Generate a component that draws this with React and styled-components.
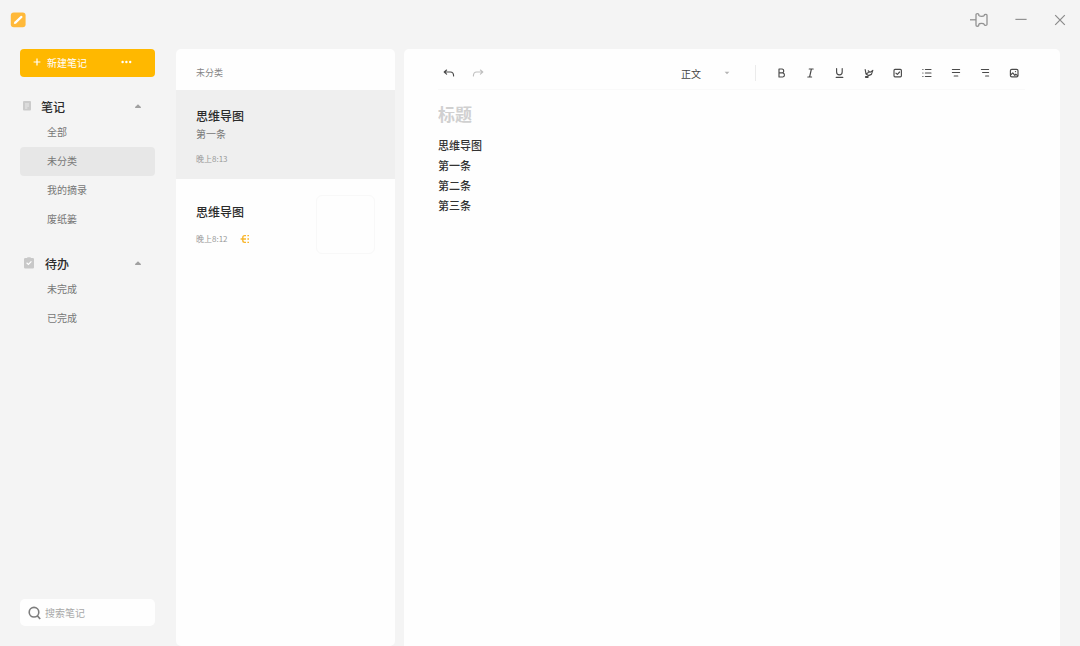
import React, { useState } from 'react'
import styled, { createGlobalStyle } from 'styled-components';

const GlobalStyle = createGlobalStyle`
    * {
        box-sizing: border-box;
    }

    body {
        margin: 0;
        background: #f4f4f4;
        color: #333;
        font-family: "Noto Sans CJK SC", "Noto Sans", sans-serif;
        font-size: 10px;
    }

    button, input, textarea, select {
        margin: 0;
        padding: 0;
        border: 0;
        outline: none;
        background: none;
        color: inherit;
        font: inherit;
    }

    button {
        cursor: pointer;
    }

    svg {
        display: block;
        flex: none;
    }

    h2, p, ul {
        margin: 0;
        padding: 0;
        font-size: inherit;
        list-style: none;
    }
`;

/* ---------- icons ---------- */

const Line = ({ size = 12, width = 1.15, children }) => (
    <svg width={size} height={size} viewBox="0 0 12 12" fill="none" stroke="currentColor"
        strokeWidth={width} strokeLinecap="round" strokeLinejoin="round" aria-hidden="true">
        {children}
    </svg>
)

const AppLogo = () => (
    <svg width="16" height="16" viewBox="0 0 16 16" aria-hidden="true">
        <rect x="0.8" y="0.4" width="14.8" height="14.8" rx="3" fill="#ffb93a" />
        <path d="M5.6 10.4 11.4 4.9" stroke="#fff" strokeWidth="2.2" strokeLinecap="round" />
        <path d="M3.8 12 4.6 9.4 6.5 11.3Z" fill="#fff" />
    </svg>
)

const PinIcon = () => (
    <svg width="18" height="16" viewBox="0 0 18 16" fill="none" stroke="#929292" strokeWidth="1.3" strokeLinejoin="round" aria-hidden="true">
        <path d="M0 7.8H6" />
        <path d="M6 2.6C6 1.2 8.8 1.2 8.8 2.6V3.6C9.2 4.6 13.6 4.6 14.2 3.6V3.2C14.4 2.1 17 2.1 17 3.2V12.6C17 13.7 14.4 13.7 14.2 12.6V12.2C13.6 11 9.2 11 8.8 12.2V13.2C8.8 14.6 6 14.6 6 13.2Z" />
    </svg>
)

const MinusIcon = () => (
    <svg width="12" height="12" viewBox="0 0 12 12" stroke="#929292" strokeWidth="1.2" aria-hidden="true">
        <path d="M0.4 5.4H11.6" />
    </svg>
)

const CloseIcon = () => (
    <svg width="12" height="12" viewBox="0 0 12 12" stroke="#8a8a8a" strokeWidth="1.2" aria-hidden="true">
        <path d="M1.2 1.2 10.8 10.8M10.8 1.2 1.2 10.8" />
    </svg>
)

const PlusIcon = () => (
    <svg width="8" height="8" viewBox="0 0 8 8" stroke="#fff" strokeWidth="1.2" aria-hidden="true">
        <path d="M0.6 4H7.4M4 0.6V7.4" />
    </svg>
)

const MoreIcon = () => (
    <svg width="12" height="4" viewBox="0 0 12 4" fill="#fff" aria-hidden="true">
        <circle cx="1.6" cy="2" r="1.2" />
        <circle cx="5.4" cy="2" r="1.2" />
        <circle cx="9.2" cy="2" r="1.2" />
    </svg>
)

const NoteIcon = () => (
    <svg width="8" height="10" viewBox="0 0 8 10" aria-hidden="true">
        <rect width="8" height="9.4" rx="1" fill="#cbcbcb" />
        <path d="M2 3H6M2 5H6M2 7H4.4" stroke="#f4f4f4" strokeWidth="0.8" />
    </svg>
)

const TodoIcon = () => (
    <svg width="12" height="12" viewBox="0 0 12 12" aria-hidden="true">
        <path d="M2.2 1H4L4.6 0.2H7.4L8 1H9.8Q11 1 11 2.2V10.3Q11 11.6 9.8 11.6H2.2Q1 11.6 1 10.3V2.2Q1 1 2.2 1Z" fill="#c8c8c8" />
        <path d="M3.6 5.8 5.4 7.4 8.4 4.4" stroke="#fff" strokeWidth="1.2" fill="none" />
    </svg>
)

const CaretUp = () => (
    <svg width="6" height="4" viewBox="0 0 6 4" aria-hidden="true">
        <path d="M0 4Q0 2.6 1.2 2L3 0.2 4.8 2Q6 2.6 6 4Z" fill="#a0a0a0" />
    </svg>
)

const CaretDown = () => (
    <svg width="6" height="4" viewBox="0 0 6 4" aria-hidden="true">
        <path d="M0.6 0.8H5.4L3 3.2Z" fill="#b4b4b4" />
    </svg>
)

const SearchIcon = () => (
    <svg width="14" height="14" viewBox="0 0 14 14" fill="none" stroke="#7d7d7d" strokeWidth="1.6" aria-hidden="true">
        <circle cx="6" cy="6.2" r="4.8" />
        <path d="M9.2 9.6 12.2 13" />
    </svg>
)

const MindMapIcon = () => (
    <svg width="10" height="10" viewBox="0 0 10 10" fill="none" stroke="#f8b62d" strokeWidth="1.4" aria-hidden="true">
        <path d="M6 1.6H4.6Q2.8 1.6 2.8 3.4V6.6Q2.8 8.4 4.6 8.4H6M0.6 5H6" />
        <path d="M7.4 1.6H9M7.4 5H9M7.4 8.4H9" />
    </svg>
)

const UndoIcon = () => (
    <Line>
        <path d="M3.6 3 1.2 5 3.6 7.2M1.2 5H7.4Q10.6 5 10.6 9" />
    </Line>
)

const RedoIcon = () => (
    <Line>
        <path d="M8.4 3 10.8 5 8.4 7.2M10.8 5H4.6Q1.4 5 1.4 9" />
    </Line>
)

const FORMATS = [
    { label: '加粗', art: <path d="M3 2H6.2A2 2 0 0 1 6.2 5.9H3ZM3 5.9H6.8A2.1 2.1 0 0 1 6.8 10H3Z" /> },
    { label: '斜体', art: <path d="M4.2 2H8.2M2.8 10H6.6M6.4 2 4.6 10" /> },
    { label: '下划线', art: <path d="M2.6 1.6V5A2.8 2.8 0 0 0 8.2 5V1.6M2.2 10.4H8.8" /> },
    {
        label: '高亮', art: <>
            <path d="M2.2 2.6 3 7 5.4 8.6 8.4 7.4 9.8 3.4 7 5.4 5.2 3.8M3 7 5.4 5.6" />
            <path d="M2.8 10H4.8" strokeWidth="1.8" />
        </>
    },
    {
        label: '待办', art: <>
            <rect x="2" y="2.4" width="7.4" height="7.4" rx="1" />
            <path d="M4 6.2 5.4 7.4 7.6 5" />
        </>
    },
    { label: '列表', art: <path d="M4.4 2.5H10M4.4 6H10M4.4 9.5H10M1.8 2.5H2M1.8 6H2M1.8 9.5H2" /> },
    { label: '居中', art: <path d="M2.4 2.5H9.6M2.4 5.5H9.6M4.2 9H7.8" /> },
    { label: '右对齐', art: <path d="M2.4 2.5H9.6M3.6 5.5H9.6M6.6 9H9.6" /> },
    {
        label: '图片', art: <>
            <rect x="2.4" y="2.4" width="7.6" height="7.4" rx="1.4" />
            <path d="M2.6 8 4.8 5.8 6.8 8.4 7.8 7.2 9.6 8.6M7.4 4.6H7.6" />
        </>
    },
]

/* ---------- data ---------- */

const GROUPS = [
    { name: '笔记', Icon: NoteIcon, items: ['全部', '未分类', '我的摘录', '废纸篓'] },
    { name: '待办', Icon: TodoIcon, items: ['未完成', '已完成'] },
]

const NOTES = [
    { id: 1, title: '思维导图', text: '第一条', time: '晚上8:13' },
    { id: 2, title: '思维导图', time: '晚上8:12', mindMap: true },
]

/* ---------- parts ---------- */

function Group({ group, current, onPick }) {
    const [open, setOpen] = useState(true);
    const { name, Icon, items } = group;

    return (
        <section>
            <GroupHead type="button" aria-expanded={open} onClick={() => setOpen(!open)}>
                <Icon />
                <span>{name}</span>
                <CaretUp />
            </GroupHead>
            {open && <ul>
                {items.map((item) => (
                    <li key={item}>
                        <NavItem type="button" $active={item === current} onClick={() => onPick(item)}>{item}</NavItem>
                    </li>
                ))}
            </ul>}
        </section>
    )
}

function NoteCard({ note, active, onClick }) {
    return (
        <Card type="button" $active={active} onClick={onClick}>
            <CardText>
                <CardTitle>{note.title}</CardTitle>
                {note.text && <CardSummary>{note.text}</CardSummary>}
                <CardTime>
                    {note.time}
                    {note.mindMap && <MindMapIcon />}
                </CardTime>
            </CardText>
            {note.mindMap && <Thumb />}
        </Card>
    )
}

function App() {
    const [category, setCategory] = useState('未分类');
    const [noteId, setNoteId] = useState(1);

    return (
        <Window>
            <GlobalStyle />
            <TitleBar>
                <AppLogo />
                <WindowButtons>
                    <button type="button" aria-label="置顶"><PinIcon /></button>
                    <button type="button" aria-label="最小化"><MinusIcon /></button>
                    <button type="button" aria-label="关闭"><CloseIcon /></button>
                </WindowButtons>
            </TitleBar>

            <Body>
                <Sidebar>
                    <NewNote>
                        <NewButton type="button"><PlusIcon />新建笔记</NewButton>
                        <MoreButton type="button" aria-label="更多"><MoreIcon /></MoreButton>
                    </NewNote>
                    {GROUPS.map((group) => (
                        <Group key={group.name} group={group} current={category} onPick={setCategory} />
                    ))}
                    <Search>
                        <SearchIcon />
                        <input type="search" aria-label="搜索笔记" placeholder="搜索笔记" />
                    </Search>
                </Sidebar>

                <NoteList>
                    <ListHead>{category}</ListHead>
                    {NOTES.map((note) => (
                        <NoteCard key={note.id} note={note} active={note.id === noteId} onClick={() => setNoteId(note.id)} />
                    ))}
                </NoteList>

                <Editor>
                    <Toolbar>
                        <Tools>
                            <Tool type="button" aria-label="撤销"><UndoIcon /></Tool>
                            <Tool type="button" aria-label="重做" disabled><RedoIcon /></Tool>
                        </Tools>
                        <StylePicker>
                            <select aria-label="段落样式" defaultValue="正文">
                                <option>正文</option>
                            </select>
                            <CaretDown />
                        </StylePicker>
                        <Divider />
                        <Tools>
                            {FORMATS.map(({ label, art }) => (
                                <Tool key={label} type="button" aria-label={label}><Line>{art}</Line></Tool>
                            ))}
                        </Tools>
                    </Toolbar>
                    <TitleInput aria-label="标题" placeholder="标题" />
                    <Content aria-label="正文" spellCheck="false" defaultValue={'思维导图\n第一条\n第二条\n第三条'} />
                </Editor>
            </Body>
        </Window>
    )
}


const Window = styled.div`
    display: flex;
    flex-direction: column;
    min-height: 100vh;
`;

const TitleBar = styled.header`
    display: flex;
    align-items: center;
    justify-content: space-between;
    height: 40px;
    padding: 0 14px 0 10px;
`;

const WindowButtons = styled.div`
    display: flex;
    align-items: center;
    gap: 27px;
`;

const Body = styled.div`
    display: flex;
    flex: 1;
    padding: 9px 20px 0;
`;

const Sidebar = styled.nav`
    display: flex;
    flex-direction: column;
    gap: 19px;
    flex: none;
    width: 135px;
    margin-right: 21px;
    padding-bottom: 20px;
`;

const NewNote = styled.div`
    display: flex;
    align-items: center;
    justify-content: space-between;
    height: 28px;
    padding: 0 22px 2px 13px;
    border-radius: 4px;
    background: #ffb800;
    color: #fff;
`;

const NewButton = styled.button`
    display: flex;
    align-items: center;
    gap: 6px;
`;

const MoreButton = styled.button`
    padding: 4px 0;
`;

const GroupHead = styled.button`
    display: flex;
    align-items: center;
    gap: 10px;
    width: 100%;
    height: 22px;
    padding: 0 14px 2px 3px;
    color: #2b2b2b;
    font-size: 12px;
    font-weight: 500;
    text-align: left;

    span {
        flex: 1;
    }
`;

const NavItem = styled.button`
    width: 100%;
    height: 29px;
    padding: 0 0 2px 27px;
    border-radius: 4px;
    background: ${({ $active }) => $active ? '#e7e7e7' : 'transparent'};
    color: #777;
    text-align: left;
`;

const Search = styled.label`
    display: flex;
    align-items: center;
    gap: 3px;
    height: 27px;
    margin-top: auto;
    padding: 0 8px;
    border-radius: 5px;
    background: #fefefe;

    input {
        flex: 1;
        min-width: 0;
        appearance: none;
    }

    input::placeholder {
        color: #a8a8a8;
    }
`;

const NoteList = styled.section`
    flex: none;
    width: 219px;
    margin-right: 9px;
    border-radius: 5px;
    background: #fefefe;
`;

const ListHead = styled.h2`
    height: 41px;
    padding: 16px 20px 0;
    color: #858585;
    font-size: 9px;
    font-weight: 400;
    line-height: 16px;
`;

const Card = styled.button`
    display: flex;
    align-items: center;
    justify-content: space-between;
    width: 100%;
    padding: 16px 20px 12px;
    background: ${({ $active }) => $active ? '#efefef' : 'transparent'};
    text-align: left;
`;

const CardText = styled.div`
    display: flex;
    flex-direction: column;
`;

const CardTitle = styled.p`
    color: #2b2b2b;
    font-size: 12px;
    font-weight: 500;
    line-height: 20px;
`;

const CardSummary = styled.p`
    color: #777;
    line-height: 16px;
`;

const CardTime = styled.p`
    display: flex;
    align-items: center;
    gap: 12px;
    margin-top: 9px;
    color: #999;
    font-size: 8px;
    line-height: 16px;
`;

const Thumb = styled.div`
    width: 59px;
    height: 59px;
    border: 1px solid #f8f8f8;
    border-radius: 6px;
`;

const Editor = styled.main`
    display: flex;
    flex: 1;
    flex-direction: column;
    min-width: 0;
    padding: 0 35px 0 34px;
    border-radius: 5px 5px 0 0;
    background: #fefefe;
`;

const Toolbar = styled.div`
    display: flex;
    align-items: center;
    height: 41px;
    padding-top: 8px;
    border-bottom: 1px solid #f9f9f9;
`;

const Tools = styled.div`
    display: flex;
    gap: 7px;
`;

const Tool = styled.button`
    display: flex;
    align-items: center;
    justify-content: center;
    width: 22px;
    height: 22px;
    color: #4a4a4a;

    &:disabled {
        color: #c0c0c0;
        cursor: default;
    }
`;

const StylePicker = styled.label`
    display: flex;
    align-items: center;
    margin-left: auto;
    color: #444;

    select {
        width: 43px;
        appearance: none;
    }
`;

const Divider = styled.span`
    width: 1px;
    height: 16px;
    margin: 0 15px 0 25px;
    background: #ebebeb;
`;

const TitleInput = styled.input`
    height: 24px;
    margin-top: 12px;
    font-size: 17px;
    font-weight: 700;
    line-height: 24px;

    &::placeholder {
        color: #d0d0d0;
    }
`;

const Content = styled.textarea`
    flex: 1;
    margin-top: 9px;
    color: #333;
    font-size: 11px;
    font-weight: 500;
    line-height: 20px;
    resize: none;
`;


export default App;
